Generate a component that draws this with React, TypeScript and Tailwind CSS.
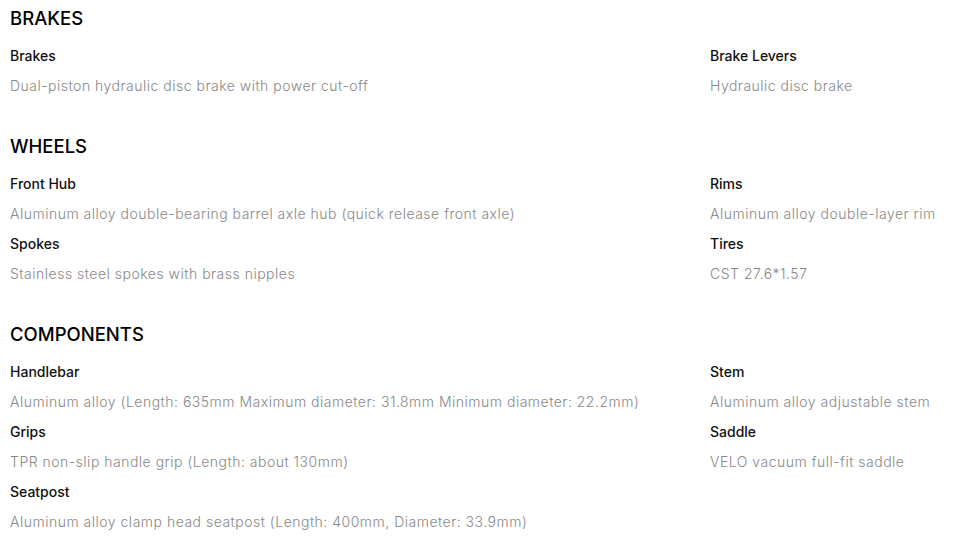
type Spec = { label: string; value: string };
type Section = { title: string; left: Spec[]; right: Spec[] };

const sections: Section[] = [
  {
    title: 'BRAKES',
    left: [{ label: 'Brakes', value: 'Dual-piston hydraulic disc brake with power cut-off' }],
    right: [{ label: 'Brake Levers', value: 'Hydraulic disc brake' }],
  },
  {
    title: 'WHEELS',
    left: [
      { label: 'Front Hub', value: 'Aluminum alloy double-bearing barrel axle hub (quick release front axle)' },
      { label: 'Spokes', value: 'Stainless steel spokes with brass nipples' },
    ],
    right: [
      { label: 'Rims', value: 'Aluminum alloy double-layer rim' },
      { label: 'Tires', value: 'CST 27.6*1.57' },
    ],
  },
  {
    title: 'COMPONENTS',
    left: [
      { label: 'Handlebar', value: 'Aluminum alloy (Length: 635mm Maximum diameter: 31.8mm Minimum diameter: 22.2mm)' },
      { label: 'Grips', value: 'TPR non-slip handle grip (Length: about 130mm)' },
      { label: 'Seatpost', value: 'Aluminum alloy clamp head seatpost (Length: 400mm, Diameter: 33.9mm)' },
    ],
    right: [
      { label: 'Stem', value: 'Aluminum alloy adjustable stem' },
      { label: 'Saddle', value: 'VELO vacuum full-fit saddle' },
    ],
  },
];

function SpecList({ items }: { items: Spec[] }) {
  return (
    <div className="flex flex-col">
      {items.map((item) => (
        <div key={item.label}>
          <div className="text-[14px] leading-[30px] font-medium text-[#111]">{item.label}</div>
          <div className="text-[14px] leading-[30px] font-light tracking-[0.5px] text-[#888]">{item.value}</div>
        </div>
      ))}
    </div>
  );
}

export default function App() {
  return (
    <div className="bg-white px-[10px]" style={{ fontFamily: 'Inter, "Noto Sans", sans-serif' }}>
      {sections.map((section) => (
        <section key={section.title} className="mb-[27px]">
          <h2 className="text-[18.5px] leading-[36px] font-medium text-black">{section.title}</h2>
          <div className="mt-[5px] grid grid-cols-[700px_1fr]">
            <SpecList items={section.left} />
            <SpecList items={section.right} />
          </div>
        </section>
      ))}
    </div>
  );
}
